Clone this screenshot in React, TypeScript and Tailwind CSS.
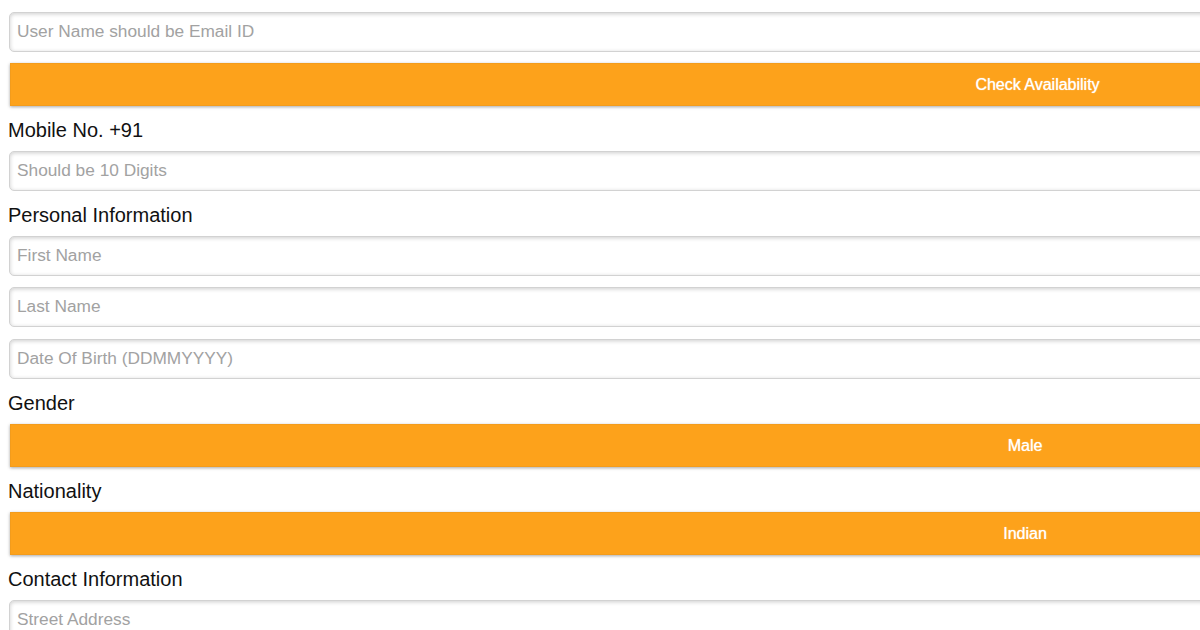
import React from "react";

function Field({ placeholder, className = "" }: { placeholder: string; className?: string }) {
  return (
    <input
      type="text"
      placeholder={placeholder}
      className={`ml-[9px] box-border h-[40px] w-[2060px] shrink-0 rounded-[5px] border border-[#d2d2d2] bg-white pb-[1px] pl-[7px] text-[17.3px] text-[#333] shadow-[inset_0_1px_4px_rgba(0,0,0,0.2)] outline-none placeholder:text-[#a2a2a2] ${className}`}
    />
  );
}

function Label({ children }: { children: React.ReactNode }) {
  return (
    <div className="ml-[8px] mt-[12px] mb-[9px] h-[24px] text-[20px] leading-[24px] text-[#111]">
      {children}
    </div>
  );
}

function OrangeBar({ children, wide = false }: { children: React.ReactNode; wide?: boolean }) {
  return (
    <div
      className={`ml-[10px] box-border flex h-[43px] shrink-0 items-center justify-center border border-[#f39c1c] bg-[#fda21b] text-[16px] text-white shadow-[0_1px_3px_rgba(0,0,0,0.35)] [text-shadow:0_0_1px_rgba(255,255,255,0.9)] ${
        wide ? "w-[2055px]" : "w-[2030px]"
      }`}
    >
      {children}
    </div>
  );
}

export default function App() {
  return (
    <div className="h-[630px] w-[1200px] overflow-hidden bg-white font-['Liberation_Sans',Arial,Helvetica,sans-serif]">
      <div className="flex w-[2100px] flex-col pt-[12px]">
        <Field placeholder="User Name should be Email ID" />
        <div className="mt-[11px]">
          <OrangeBar wide>Check Availability</OrangeBar>
        </div>
        <Label>Mobile No. +91</Label>
        <Field placeholder="Should be 10 Digits" />
        <Label>Personal Information</Label>
        <Field placeholder="First Name" />
        <Field placeholder="Last Name" className="mt-[11px]" />
        <Field placeholder="Date Of Birth (DDMMYYYY)" className="mt-[12px]" />
        <Label>Gender</Label>
        <OrangeBar>Male</OrangeBar>
        <Label>Nationality</Label>
        <OrangeBar>Indian</OrangeBar>
        <Label>Contact Information</Label>
        <Field placeholder="Street Address" />
      </div>
    </div>
  );
}
